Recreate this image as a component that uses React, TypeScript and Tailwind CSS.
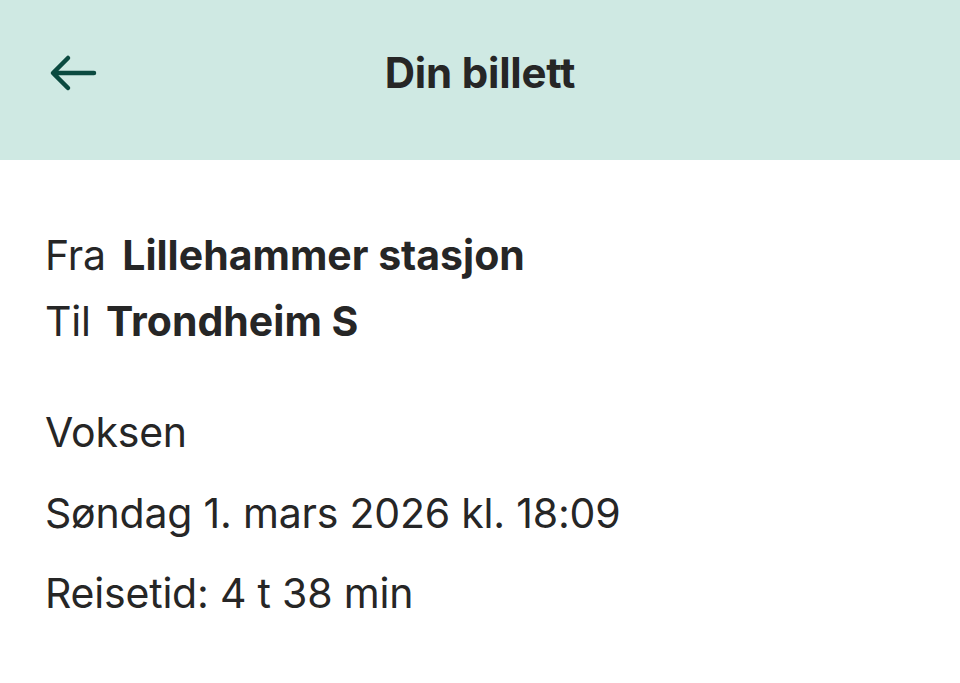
export default function App() {
  return (
    <div className="w-[960px] h-[683px] bg-white text-[#262626]" style={{ fontFamily: 'Inter, "Noto Sans", sans-serif' }}>
      <div className="h-[160px] bg-[#cfe9e3] relative flex items-center justify-center pb-[16px]">
        <svg className="absolute left-[48px] top-[52px]" width="52" height="42" viewBox="0 0 52 42" fill="none">
          <path d="M46 21H6M20 6L5 21l15 15" stroke="#0b4a40" strokeWidth="4.5" strokeLinecap="round" strokeLinejoin="round" />
        </svg>
        <h1 className="text-[42px] font-bold tracking-[-0.2px]">Din billett</h1>
      </div>
      <div className="px-[45px] pt-[62px]">
        <div className="text-[41px] leading-[66px] tracking-[-0.2px]">
          <div>Fra <span className="font-bold ml-[5px] tracking-[0px]">Lillehammer stasjon</span></div>
          <div>Til <span className="font-bold ml-[4px] tracking-[0px]">Trondheim S</span></div>
        </div>
        <div className="mt-[38px] text-[41px] leading-[80.5px] tracking-[-0.2px]">
          <div>Voksen</div>
          <div>Søndag 1. mars 2026 kl. 18:09</div>
          <div>Reisetid: 4 t 38 min</div>
        </div>
      </div>
    </div>
  );
}
